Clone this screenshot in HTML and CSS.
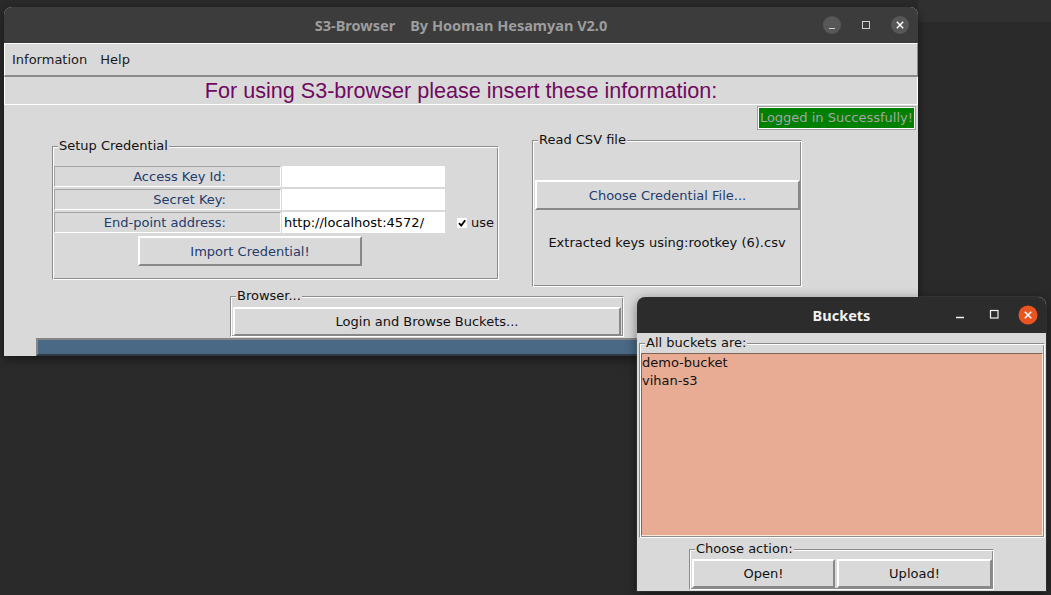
FILE: index.html
```html
<!DOCTYPE html>
<html>
<head>
<meta charset="utf-8">
<title>S3-Browser</title>
<link rel="stylesheet" href="styles.css">
</head>
<body>
<div class="desk-strip"></div>

<div class="window main-win">
  <div class="titlebar inactive">
    <span class="title">S3-Browser    By Hooman Hesamyan V2.0</span>
    <div class="wm">
      <svg viewBox="0 0 20 20"><circle cx="10" cy="10" r="9" fill="#575757"/><line x1="7" y1="13.5" x2="13" y2="13.5" stroke="#cfcfcf" stroke-width="1.2"/></svg>
      <svg viewBox="0 0 20 20"><rect x="6.5" y="6.5" width="7" height="7" fill="none" stroke="#d0d0d0" stroke-width="1"/></svg>
      <svg viewBox="0 0 20 20"><circle cx="10" cy="10" r="9" fill="#575757"/><path d="M6.8 6.8 L13.2 13.2 M13.2 6.8 L6.8 13.2" stroke="#ffffff" stroke-width="1.5"/></svg>
    </div>
  </div>
  <div class="menubar"><span>Information</span><span>Help</span></div>
  <div class="heading">For using S3-browser please insert these information:</div>
  <div class="content">
    <div class="status-row"><span class="status">Logged in Successfully!</span></div>
    <div class="frames-row">
      <fieldset class="lf setup">
        <legend>Setup Credential</legend>
        <div class="cred-grid">
          <span class="cell">Access Key Id:</span><span class="entry"></span><span></span>
          <span class="cell">Secret Key:</span><span class="entry"></span><span></span>
          <span class="cell">End-point address:</span><span class="entry">http://localhost:4572/</span>
          <span class="check"><svg class="box" viewBox="0 0 10 10"><rect x="0" y="0" width="10" height="10" fill="#fff"/><path d="M2 5.2 L4.2 7.6 L8.2 2.2" fill="none" stroke="#000" stroke-width="1.8"/></svg>use</span>
        </div>
        <button class="btn navy import">Import Credential!</button>
      </fieldset>
      <fieldset class="lf csv">
        <legend>Read CSV file</legend>
        <button class="btn navy choose">Choose Credential File...</button>
        <div class="extracted">Extracted keys using:rootkey (6).csv</div>
      </fieldset>
    </div>
    <fieldset class="lf browser">
      <legend>Browser...</legend>
      <button class="btn login">Login and Browse Buckets...</button>
    </fieldset>
    <div class="progress"></div>
  </div>
</div>

<div class="window buckets-win">
  <div class="titlebar active">
    <span class="title">Buckets</span>
    <div class="wm">
      <svg viewBox="0 0 20 20"><line x1="6" y1="12.5" x2="14" y2="12.5" stroke="#f0f0f0" stroke-width="1.3"/></svg>
      <svg viewBox="0 0 20 20"><rect x="6.5" y="5.5" width="7.5" height="7.5" fill="none" stroke="#f0f0f0" stroke-width="1.2"/></svg>
      <svg viewBox="0 0 20 20"><circle cx="10" cy="10" r="9.5" fill="#e95420"/><path d="M6.8 6.8 L13.2 13.2 M13.2 6.8 L6.8 13.2" stroke="#ffffff" stroke-width="1.6"/></svg>
    </div>
  </div>
  <div class="bk-content">
    <fieldset class="lf all">
      <legend>All buckets are:</legend>
      <ul class="listbox">
        <li>demo-bucket</li>
        <li>vihan-s3</li>
      </ul>
    </fieldset>
    <fieldset class="lf action">
      <legend>Choose action:</legend>
      <div class="action-row">
        <button class="btn open">Open!</button>
        <button class="btn upload">Upload!</button>
      </div>
    </fieldset>
  </div>
</div>
</body>
</html>
```

FILE: styles.css
```css
* { box-sizing: border-box; }
html, body { margin: 0; padding: 0; }
body {
  width: 1051px;
  height: 595px;
  background: #2a2a2a;
  font-family: "DejaVu Sans", sans-serif;
  font-size: 13px;
  color: #1a1a1a;
  position: relative;
  overflow: hidden;
}
.desk-strip {
  position: absolute;
  left: 918px;
  top: 0;
  width: 133px;
  height: 22px;
  background: #303030;
}
.window {
  position: absolute;
  background: #d9d9d9;
  border-radius: 8px 8px 0 0;
  overflow: hidden;
  box-shadow: 0 3px 10px rgba(0,0,0,0.45);
}
.main-win { left: 4px; top: 7px; width: 914px; height: 349px; }
.buckets-win {
  left: 637px; top: 297px; width: 409px; height: 294px;
  box-shadow: 0 0 0 1px rgba(255,255,255,0.07), 0 3px 12px rgba(0,0,0,0.5);
}

/* title bars */
.titlebar {
  height: 36px;
  display: grid;
  grid-template-columns: 1fr auto 1fr;
  align-items: center;
  font-family: "Noto Sans", sans-serif;
  font-weight: 700;
  font-size: 14.5px;
}
.titlebar.inactive { background: #3c3c3c; color: #9d9d9d; }
.titlebar.active { background: #2c2c2c; color: #f2f2f2; }
.title { grid-column: 2; white-space: pre; }
.wm {
  grid-column: 3;
  justify-self: end;
  display: flex;
  gap: 14px;
  padding-right: 8px;
}
.wm svg { width: 20px; height: 20px; display: block; }

/* menu + heading */
.menubar {
  height: 34px;
  border-top: 1px solid #fff;
  border-left: 1px solid #fff;
  border-right: 1px solid #8a8a8a;
  border-bottom: 2px solid #8a8a8a;
  display: flex;
  align-items: center;
  gap: 13px;
  padding-left: 7px;
}
.heading {
  height: 28px;
  border-left: 1px solid #fff;
  border-right: 1px solid #fff;
  border-bottom: 1px solid #fff;
  text-align: center;
  font-family: "Liberation Sans", Arial, sans-serif;
  font-size: 21.6px;
  line-height: 28px;
  color: #700a60;
}

/* content */
.status-row {
  display: flex;
  justify-content: flex-end;
  padding: 1px 2px 0 0;
}
.status {
  height: 24px;
  line-height: 20px;
  padding: 1px 2px;
  border: 1px solid #a0a0a0;
  box-shadow: inset 0 0 0 1px #fff;
  background: #008000;
  color: #a6a6a6;
}
.frames-row {
  display: flex;
  align-items: flex-start;
}

.lf {
  margin: 0;
  padding: 0;
  min-width: 0;
  border: 1px solid;
  border-color: #8c8c8c #fff #fff #8c8c8c;
  box-shadow: inset 1px 1px 0 #fff, inset -1px -1px 0 #8c8c8c;
}
.lf legend {
  line-height: 16px;
  padding: 0 1px;
  margin-left: 4px;
  background: #d9d9d9;
  color: #111;
}

.setup {
  width: 447px;
  margin: 8px 0 0 48px;
  padding: 12px 1px 13px 1px;
}
.cred-grid {
  display: grid;
  grid-template-columns: 227px 163px auto;
  grid-auto-rows: 21px;
  row-gap: 2px;
  column-gap: 1px;
  align-items: center;
}
.cell {
  height: 21px;
  line-height: 19px;
  border: 1px solid;
  border-color: #a4a4a4 #fff #fff #a4a4a4;
  text-align: right;
  padding-right: 54px;
  color: #243c6c;
}
.entry {
  height: 21px;
  line-height: 21px;
  background: #fff;
  padding-left: 2px;
  color: #000;
}
.check {
  display: flex;
  align-items: center;
  gap: 4px;
  margin-left: 11px;
  color: #111;
}
.check .box { width: 10px; height: 10px; display: block; }

.btn {
  display: block;
  font-family: "DejaVu Sans", sans-serif;
  font-size: 13px;
  background: #d9d9d9;
  color: #111;
  border: 2px solid;
  border-color: #fff #888 #888 #fff;
  padding: 0;
  margin: 0;
}
.btn.navy { color: #243c6c; }
.import { width: 224px; height: 30px; margin: 3px 0 0 84px; }

.csv {
  width: 270px;
  margin: 2px 0 0 33px;
  padding: 32px 1px 35px 1px;
}
.choose { width: 265px; height: 30px; margin-left: 1px; }
.extracted {
  margin-top: 25px;
  line-height: 16px;
  text-align: center;
  color: #111;
}

.browser {
  width: 394px;
  margin: 1px 0 0 226px;
  padding: 3px 1px 0 1px;
}
.login { width: 388px; height: 29px; margin-left: 1px; }

.progress {
  width: 846px;
  height: 18px;
  margin: 1px 0 0 32px;
  background: #4a6985;
  border: 2px solid;
  border-color: #858585 #858585 #2f3a45 #858585;
}

/* buckets window */
.bk-content {
  display: flex;
  flex-direction: column;
}
.all {
  margin: 2px 1px 0 2px;
  padding: 2px 1px 1px 1px;
}
.listbox {
  list-style: none;
  margin: 0;
  padding: 0;
  height: 183px;
  background: #e8ac94;
  border: 1px solid;
  border-color: #7d6558 #f7ead8 #f7ead8 #7d6558;
}
.listbox li { line-height: 18px; padding-left: 0; color: #111; }
.action {
  width: 305px;
  margin: 3px auto 0 auto;
  padding: 2px 1px 1px 1px;
}
.action-row { display: flex; gap: 2px; }
.open { width: 143px; height: 29px; margin-left: 1px; }
.upload { width: 155px; height: 29px; }
```
